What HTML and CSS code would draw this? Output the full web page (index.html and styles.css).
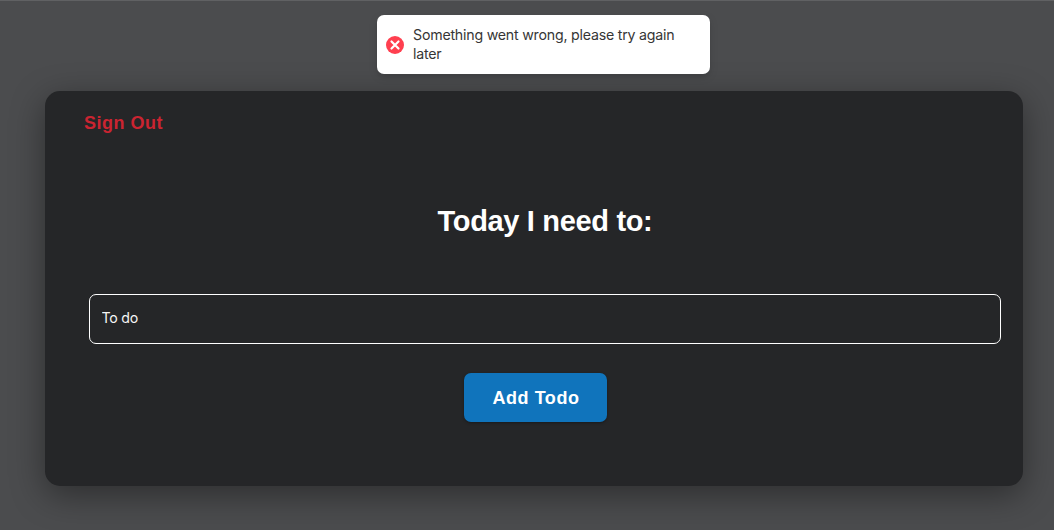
FILE: index.html
```html
<!DOCTYPE html>
<html lang="en">
<head>
<meta charset="utf-8">
<title>Todo</title>
<link rel="stylesheet" href="styles.css">
</head>
<body>
<div class="toast" role="alert">
  <svg class="toast-icon" viewBox="0 0 18 18" aria-hidden="true">
    <circle cx="9" cy="9" r="9" fill="#ff3f4f"/>
    <path d="M5.5 5.5 12.5 12.5M12.5 5.5 5.5 12.5" stroke="#fff" stroke-width="2.2" stroke-linecap="round"/>
  </svg>
  <p class="toast-text">Something went wrong, please try again later</p>
</div>
<main class="card">
  <button class="sign-out">Sign Out</button>
  <h1 class="title">Today I need to:</h1>
  <form class="todo-form">
    <input class="todo-input" type="text" placeholder="To do" aria-label="To do">
    <button class="add" type="button">Add Todo</button>
  </form>
</main>
</body>
</html>
```
FILE: styles.css
```css
* { box-sizing: border-box; }
body {
  margin: 0;
  height: 530px;
  overflow: hidden;
  padding: 90px 31px 0 45px;
  border-top: 1px solid #606163;
  background: #4b4c4e;
  font-family: "Liberation Sans", Arial, sans-serif;
}
.toast {
  position: absolute;
  top: 15px;
  left: 377px;
  width: 333px;
  height: 59px;
  display: flex;
  align-items: center;
  padding: 0 20px 0 9px;
  gap: 9px;
  border-radius: 7px;
  background: #fff;
  box-shadow: 0 3px 10px rgba(0, 0, 0, .1), 0 3px 3px rgba(0, 0, 0, .05);
}
.toast-icon { width: 18px; height: 18px; flex: none; margin-top: 1px; }
.toast-text {
  margin: 0 0 1px;
  color: #363636;
  font: 14.2px/19px Inter, sans-serif;
  letter-spacing: -.22px;
}
.card {
  height: 395px;
  display: flex;
  flex-direction: column;
  padding: 20px 22px 0 39px;
  border-radius: 15px;
  background: #252628;
  box-shadow: 0 9px 34px rgba(0, 0, 0, .4);
}
.sign-out {
  align-self: flex-start;
  padding: 0;
  border: 0;
  background: none;
  color: #cb2431;
  font: bold 18px/24px "Liberation Sans", Arial, sans-serif;
  letter-spacing: .5px;
}
.title {
  margin: 68px 0 0 5px;
  color: #fff;
  font-size: 29px;
  line-height: 36px;
  letter-spacing: -.33px;
  text-align: center;
}
.todo-form { display: flex; flex-direction: column; margin: 55px 0 0 5px; }
.todo-input {
  height: 50px;
  padding: 0 12px 3px 11.5px;
  border: 1px solid #fff;
  border-radius: 7px;
  background: transparent;
  font: 14.2px Inter, sans-serif;
  letter-spacing: -.25px;
}
.todo-input::placeholder { color: #f5f5f5; opacity: 1; }
.add {
  width: 143px;
  height: 49px;
  margin: 29px auto 0 375px;
  padding: 1px 0 0 1px;
  border: 0;
  border-radius: 7px;
  background: #1074bc;
  box-shadow: 0 1px 3px rgba(0, 0, 0, .35);
  color: #fff;
  font: bold 18px "Liberation Sans", Arial, sans-serif;
  letter-spacing: .55px;
}
```
